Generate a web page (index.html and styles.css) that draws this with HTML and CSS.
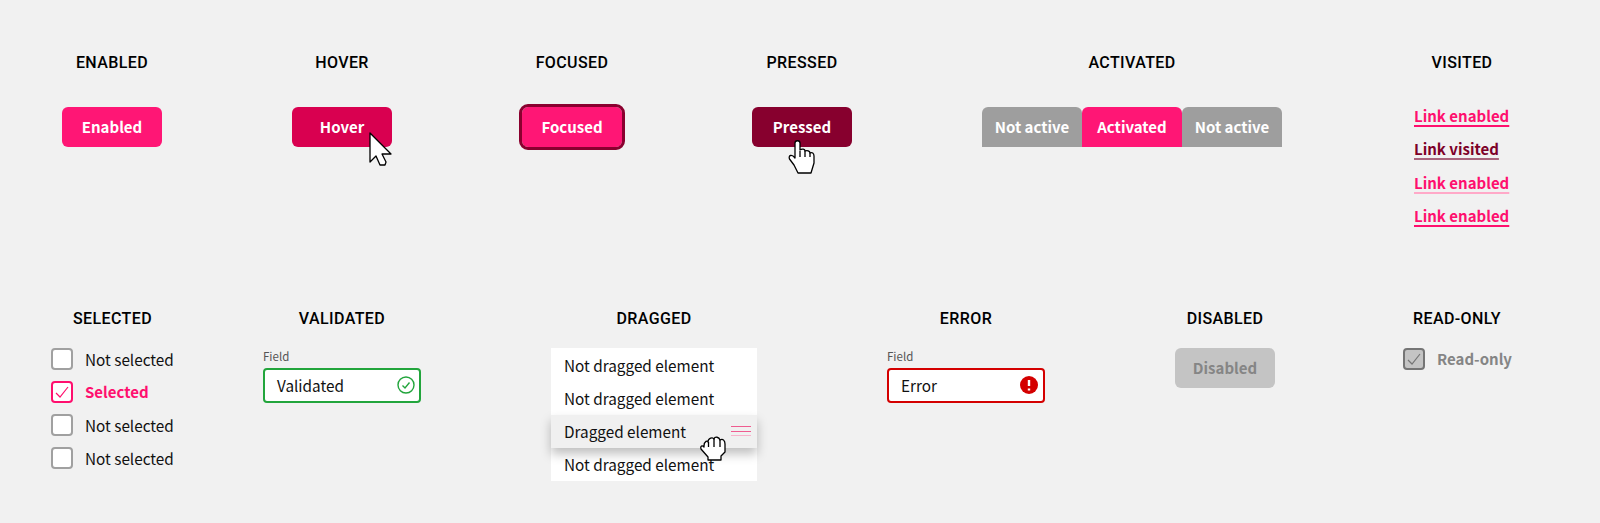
FILE: index.html
```html
<!DOCTYPE html>
<html lang="en">

<head>
    <meta charset="UTF-8">
    <meta name="viewport" content="width=device-width, initial-scale=1.0">
    <title>Component states</title>
    <link rel="stylesheet" href="styles.css">
</head>

<body>
    <section class="row row-top">
        <div class="col">
            <h2>ENABLED</h2>
            <button class="button">Enabled</button>
        </div>
        <div class="col">
            <h2>HOVER</h2>
            <button class="button button-hover">Hover
                <svg class="cursor cursor-arrow" width="26" height="36" viewBox="0 0 26 36">
                    <path d="M1 1V30L7 24L11 33L16 33L17 30L13 22H22Z" />
                </svg>
            </button>
        </div>
        <div class="col">
            <h2>FOCUSED</h2>
            <button class="button button-focused">Focused</button>
        </div>
        <div class="col">
            <h2>PRESSED</h2>
            <button class="button button-pressed">Pressed
                <svg class="cursor cursor-point" width="40" height="50" viewBox="0 0 40 50">
                    <path d="M15 13C15 10 20 10 20 13V20C22 18.5 25 19 25 21C27 20 30 21 30 23C32 22 34 23 34 26V33L31 43H18L14 35L9.5 29C8 25 12 24 15 28Z" />
                    <path d="M20 21V27M25 21V27M30 23V27" />
                </svg>
            </button>
        </div>
        <div class="col col-wide">
            <h2>ACTIVATED</h2>
            <div class="tabs">
                <div class="tab">Not active</div>
                <div class="tab tab-active">Activated</div>
                <div class="tab">Not active</div>
            </div>
        </div>
        <div class="col">
            <h2>VISITED</h2>
            <div class="links">
                <a class="link" href="#">Link enabled</a>
                <a class="link link-visited" href="#">Link visited</a>
                <a class="link link-soft" href="#">Link enabled</a>
                <a class="link" href="#">Link enabled</a>
            </div>
        </div>
    </section>

    <section class="row row-bottom">
        <div class="col col-selected">
            <h2>SELECTED</h2>
            <div class="checks">
                <div class="check"><span class="box"></span>Not selected</div>
                <div class="check check-on">
                    <span class="box">
                        <svg width="18" height="18" viewBox="0 0 18 18"><path d="M3 10L7 14L15 4" /></svg>
                    </span>Selected
                </div>
                <div class="check"><span class="box"></span>Not selected</div>
                <div class="check"><span class="box"></span>Not selected</div>
            </div>
        </div>
        <div class="col col-field">
            <h2>VALIDATED</h2>
            <label class="field-label">Field</label>
            <div class="field field-ok">Validated
                <svg width="18" height="18" viewBox="0 0 18 18">
                    <circle cx="9" cy="9" r="8" />
                    <path d="M5.5 9.5L8 12L12.5 6.5" />
                </svg>
            </div>
        </div>
        <div class="col col-drag">
            <h2>DRAGGED</h2>
            <ul class="drag-list">
                <li>Not dragged element</li>
                <li>Not dragged element</li>
                <li class="dragged">Dragged element
                    <span class="handle"><i></i><i></i><i></i></span>
                </li>
                <li>Not dragged element</li>
                <svg class="cursor cursor-grab" width="40" height="40" viewBox="0 0 40 40">
                    <path d="M14 23C14 18 18 17 18 19C18 14.5 23 14 24 16C25 13 29 14 30 17C33 15 35 18 35 21V29L31 33V37H18V34L11 26C10 23 12 22 14 24Z" />
                    <path d="M18.500 19V24M24 16V24M30 17V24" />
                </svg>
            </ul>
        </div>
        <div class="col col-field">
            <h2>ERROR</h2>
            <label class="field-label">Field</label>
            <div class="field field-error">Error
                <svg width="18" height="18" viewBox="0 0 18 18">
                    <circle class="dot" cx="9" cy="9" r="9" />
                    <path class="mark" d="M9 4V10M9 12.500V14.500" />
                </svg>
            </div>
        </div>
        <div class="col">
            <h2>DISABLED</h2>
            <button class="button button-disabled">Disabled</button>
        </div>
        <div class="col col-readonly">
            <h2>READ-ONLY</h2>
            <div class="check check-readonly">
                <span class="box">
                    <svg width="18" height="18" viewBox="0 0 18 18"><path d="M3 10L7 14L15 4" /></svg>
                </span>Read-only
            </div>
        </div>
    </section>
</body>

</html>
```

FILE: styles.css
```css
body {
    margin: 0;
    background-color: #f1f1f1;
    color: #111;
    font-family: "Noto Sans CJK JP", "Noto Sans", sans-serif;
    font-size: 15.3px;
    line-height: 20px;
}

.row {
    display: flex;
    align-items: flex-start;
    gap: 130px;
}

.row-top {
    height: 309px;
    padding-top: 53px;
    padding-left: 62px;
    box-sizing: border-box;
}

.row-top h2 {
    margin-bottom: 34px;
}

.row-bottom {
    padding-left: 51px;
}

.row-bottom h2 {
    margin-bottom: 19px;
}

h2 {
    margin: 0;
    color: #000;
    font-family: Roboto, sans-serif;
    font-size: 16px;
    font-weight: 500;
    line-height: 20px;
    letter-spacing: 0.4px;
    text-align: center;
    white-space: nowrap;
}

.col {
    width: 100px;
    flex-shrink: 0;
}

.col-wide {
    width: 300px;
}

.col-selected {
    width: 123px;
    margin-right: -41px;
}

.col-field {
    width: 158px;
}

.col-drag {
    width: 206px;
}

.col-readonly {
    width: 104px;
}

/* buttons */
.button {
    position: relative;
    display: block;
    width: 100px;
    height: 40px;
    padding: 0 0 1px;
    border: none;
    border-radius: 6px;
    background-color: #ff1675;
    color: #fff;
    font-family: inherit;
    font-size: 15px;
    font-weight: 700;
    line-height: 20px;
}

.button-hover {
    background-color: #d90050;
}

.button-focused {
    outline: 3px solid #8a002f;
}

.button-pressed {
    background-color: #87002e;
}

.button-disabled {
    margin-top: 2px;
    background-color: #c4c4c4;
    color: #858585;
}

.cursor {
    position: absolute;
    fill: #fff;
    stroke: #000;
    stroke-width: 1.3;
    stroke-linejoin: round;
}

.cursor-arrow {
    left: 77px;
    top: 25px;
}

.cursor-point {
    left: 28px;
    top: 23px;
}

.cursor-grab {
    left: 139px;
    top: 75px;
}

/* tabs */
.tabs {
    display: flex;
}

.tab {
    width: 100px;
    height: 39px;
    padding-bottom: 1px;
    border-radius: 6px 6px 0 0;
    background-color: #9e9e9e;
    color: #fff;
    font-size: 15px;
    font-weight: 700;
    line-height: 39px;
    text-align: center;
}

.tab-active {
    background-color: #ff1675;
}

/* links */
.links {
    display: flex;
    flex-direction: column;
    align-items: flex-start;
    gap: 13.3px;
    margin-top: -1px;
    padding-left: 2px;
}

.link {
    color: #ff0f6e;
    font-size: 15px;
    font-weight: 700;
    white-space: nowrap;
    text-decoration: underline;
    text-decoration-thickness: 2px;
    text-underline-offset: 3px;
}

.link-visited {
    color: #7d0028;
    text-decoration-color: #a8647c;
}

.link-soft {
    text-decoration-color: #ffa9c8;
}

/* checkboxes */
.checks {
    display: flex;
    flex-direction: column;
    gap: 11.3px;
    margin-top: -0.5px;
}

.check {
    display: flex;
    align-items: center;
    gap: 12px;
    height: 22px;
    white-space: nowrap;
}

.box {
    display: flex;
    flex-shrink: 0;
    align-items: center;
    justify-content: center;
    width: 22px;
    height: 22px;
    box-sizing: border-box;
    border: 2px solid #a0a0a0;
    border-radius: 4px;
    background-color: #fff;
}

.box svg {
    fill: none;
    stroke: currentColor;
    stroke-width: 1.2;
}

.check-on {
    color: #ff0f6e;
    font-size: 15px;
    font-weight: 700;
}

.check-on .box {
    border-color: #ff0f6e;
}

.check-readonly {
    margin-left: -2px;
    color: #858585;
    font-size: 15px;
    font-weight: 700;
}

.check-readonly .box {
    border-color: #757575;
    background-color: #c4c4c4;
    color: #757575;
}

/* fields */
.field-label {
    display: block;
    height: 16px;
    margin-bottom: 4px;
    color: #555;
    font-size: 11.5px;
    line-height: 16px;
}

.field {
    display: flex;
    align-items: center;
    justify-content: space-between;
    height: 35px;
    box-sizing: border-box;
    padding: 0 4px 1px 12px;
    border: 2px solid;
    border-radius: 4px;
    background-color: #fff;
}

.field-ok {
    border-color: #22a53c;
}

.field-ok svg {
    fill: none;
    stroke: #22a53c;
    stroke-width: 1.4;
}

.field-error {
    padding-right: 5px;
    border-color: #d40000;
}

.field-error .dot {
    fill: #d40000;
}

.field-error .mark {
    fill: none;
    stroke: #fff;
    stroke-width: 2.4;
}

/* drag list */
.drag-list {
    position: relative;
    margin: 2px 0 0;
    padding: 0;
    list-style: none;
    background-color: #fff;
}

.drag-list li {
    display: flex;
    align-items: center;
    justify-content: space-between;
    height: 33.25px;
    padding: 0 6px 0 13px;
}

.drag-list .dragged {
    position: relative;
    background-color: #f0f0f0;
    box-shadow: 0 6px 10px rgba(0, 0, 0, 0.25);
}

.handle {
    display: flex;
    flex-direction: column;
    gap: 3.5px;
    width: 20px;
}

.handle i {
    display: block;
    height: 1px;
    background-color: #ef5c90;
}

.handle i:last-child {
    background-color: #f7b4cc;
}
```
